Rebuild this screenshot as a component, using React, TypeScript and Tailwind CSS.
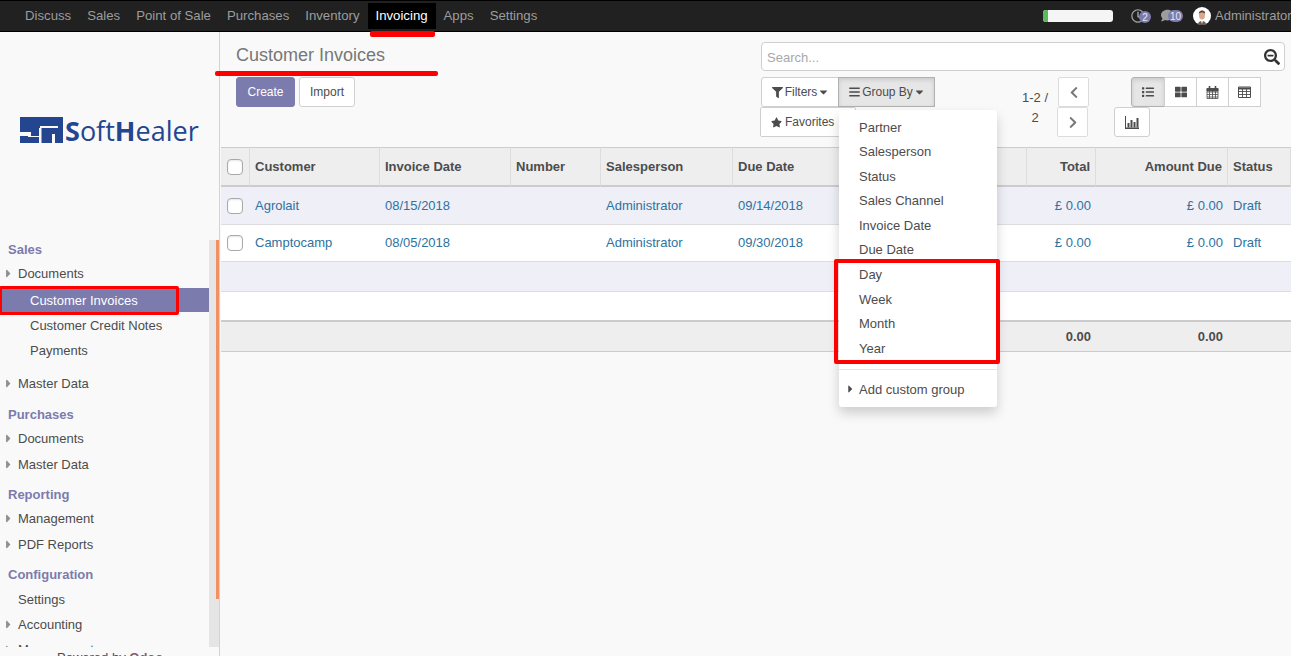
import {
  FaBars,
  FaCaretDown,
  FaCaretRight,
  FaChevronLeft,
  FaChevronRight,
  FaComment,
  FaFilter,
  FaList,
  FaRegClock,
  FaSearchMinus,
  FaStar,
  FaThLarge,
} from "react-icons/fa";

const navItems = ["Discuss", "Sales", "Point of Sale", "Purchases", "Inventory", "Invoicing", "Apps", "Settings"];

const groupItems = ["Partner", "Salesperson", "Status", "Sales Channel", "Invoice Date", "Due Date", "Day", "Week", "Month", "Year"];

const rows = [
  { customer: "Agrolait", date: "08/15/2018", due: "09/14/2018", rowClass: "bg-[#eeeff7]", cellClass: "h-[38px]" },
  { customer: "Camptocamp", date: "08/05/2018", due: "09/30/2018", rowClass: "bg-white", cellClass: "h-[37px]" },
];

function Logo() {
  return (
    <div className="flex h-[26px] items-center pl-5">
      <svg width="43" height="26" viewBox="0 0 43 26" className="shrink-0">
        <rect width="43" height="26" fill="#24458f" />
        <path d="M20 9H38V11H20z M0 15H11V19H0z M19 11H21.500V26H19z M32 17H35V26H32z M8 19H19V20H8z" fill="#f9f9f9" />
      </svg>
      <div className="ml-[2px] font-['Open_Sans',sans-serif] text-[27px] leading-none text-[#24458f]">
        <span className="font-bold">S</span>
        of
        <span>t</span>
        <span className="font-bold">H</span>
        ealer
      </div>
    </div>
  );
}

function MenuHeader({ label, className }: { label: string; className: string }) {
  return <div className={`flex h-[18px] items-center pl-2 pt-[2px] font-bold text-[#7c7bad] ${className}`}>{label}</div>;
}

function MenuItem({ label, className }: { label: string; className: string }) {
  return (
    <div className={`relative flex h-6 items-center pl-[18px] pt-[2px] text-[#4c4c4c] ${className}`}>
      <FaCaretRight className="absolute left-[6px] top-[6px] h-[13px] w-[5px] text-[#8f8f8f]" />
      {label}
    </div>
  );
}

function Sidebar() {
  return (
    <aside className="flex w-[220px] shrink-0 flex-col border-r border-[#d3d3d3] bg-[#f9f9f9]">
      <div className="h-[208px] pt-[85px]">
        <Logo />
      </div>
      <div className="flex h-[407px] overflow-hidden">
        <nav className="flex-1">
          <MenuHeader label="Sales" className="" />
          <MenuItem label="Documents" className="mt-[3px]" />
          <div className="mt-[3px] flex h-6 items-center bg-[#7c7bad] pl-[30px] pt-[2px] text-white">Customer Invoices</div>
          <div className="mt-px flex h-6 items-center pl-[30px] pt-[2px] text-[#4c4c4c]">Customer Credit Notes</div>
          <div className="mt-px flex h-6 items-center pl-[30px] pt-[2px] text-[#4c4c4c]">Payments</div>
          <MenuItem label="Master Data" className="mt-[9px]" />
          <MenuHeader label="Purchases" className="mt-[10px]" />
          <MenuItem label="Documents" className="mt-[3px]" />
          <MenuItem label="Master Data" className="mt-[2px]" />
          <MenuHeader label="Reporting" className="mt-[9px]" />
          <MenuItem label="Management" className="mt-[3px]" />
          <MenuItem label="PDF Reports" className="mt-[2px]" />
          <MenuHeader label="Configuration" className="mt-[9px]" />
          <div className="mt-[4px] flex h-6 items-center pl-[18px] pt-[2px] text-[#4c4c4c]">Settings</div>
          <MenuItem label="Accounting" className="mt-px" />
          <MenuItem label="Management" className="mt-px" />
        </nav>
        <div className="flex w-[10px] shrink-0 justify-end bg-[#e5e5e5]">
          <div className="h-[359px] w-[3px] bg-[#f28f63]" />
        </div>
      </div>
      <div className="pl-[57px] pt-px text-[#4c4c4c]">
        Powered by <span className="font-bold text-[#875a7b]">Odoo</span>
      </div>
    </aside>
  );
}

function TopBar() {
  return (
    <header className="flex h-8 shrink-0 items-start justify-between overflow-hidden border-y border-black bg-[#212121] pl-[17px]">
      <div className="flex">
        {navItems.map((item) => (
          <a
            key={item}
            className={
              item === "Invoicing"
                ? "mt-[2px] flex h-[26px] items-center bg-black px-2 text-[13.2px] text-white"
                : "mt-[2px] flex h-[26px] items-center px-2 text-[13.2px] text-[#9d9d9d]"
            }
          >
            {item}
          </a>
        ))}
      </div>
      <div className="flex h-[30px] w-[248px] shrink-0 items-center">
        <div className="h-[12px] w-[70px] shrink-0 overflow-hidden rounded-[3px] bg-[#f5f5f5]">
          <div className="h-full w-[5px] bg-[#5cb85c]" />
        </div>
        <div className="relative ml-[18px] h-[14px] w-[14px]">
          <FaRegClock className="h-[14px] w-[14px] text-[#9d9d9d]" />
          <span className="absolute left-[8px] top-[2px] flex h-[12px] w-[12px] items-center justify-center rounded-full bg-[#7c7bad] text-[10px] text-[#e8e8f2]">2</span>
        </div>
        <div className="relative ml-[16px] h-[14px] w-[14px]">
          <FaComment className="h-[13px] w-[13px] text-[#9d9d9d]" />
          <span className="absolute left-[7px] top-[1px] flex h-[12px] w-[15px] items-center justify-center rounded-full bg-[#7c7bad] text-[10px] text-[#e8e8f2]">10</span>
        </div>
        <svg width="18" height="18" viewBox="0 0 18 18" className="ml-[19px] shrink-0">
          <circle cx="9" cy="9" r="9" fill="#fff" />
          <path d="M5 18c0-3 1.500-4 4-4s4 1 4 4z" fill="#6b5a50" />
          <path d="M8 13.500h2l-1 3.500z" fill="#fff" />
          <ellipse cx="9" cy="8" rx="3" ry="4.600" fill="#d9a98c" />
          <path d="M5.800 7c-.4-4.500 6.800-5 6.400 0-1-2-5.400-2-6.400 0z" fill="#5b4636" />
        </svg>
        <span className="ml-1 whitespace-nowrap text-[#9d9d9d]">Administrator</span>
      </div>
    </header>
  );
}

function CalendarIcon() {
  return (
    <svg width="13" height="14" viewBox="0 0 13 14" fill="none" stroke="#4c4c4c">
      <path d="M1 3.500h11v10H1z M1 7h11 M1 9.500h11 M1 12h11 M3.500 3.500v10 M6.500 3.500v10 M9.500 3.500v10" strokeWidth="0.8" />
      <path d="M1 3.500h11V6H1z" fill="#4c4c4c" strokeWidth="0.8" />
      <path d="M3.500 1v3 M9.500 1v3" strokeWidth="1.600" />
    </svg>
  );
}

function TableIcon() {
  return (
    <svg width="13" height="12" viewBox="0 0 13 12" fill="none" stroke="#4c4c4c">
      <path d="M.5 1h12v10.500H.5z" />
      <path d="M.5 2.500h12" strokeWidth="2" />
      <path d="M.5 5.500h12 M.5 8.500h12 M4.500 2v9 M8.500 2v9" strokeWidth="0.9" />
    </svg>
  );
}

function BarsIcon() {
  return (
    <svg width="14" height="13" viewBox="0 0 14 13" fill="#4c4c4c">
      <path d="M0 0h1v11.500h14V13H0z" />
      <path d="M2.500 7h2v4.500h-2z M5.500 4h2v7.500h-2z M8.500 6h2v5.500h-2z M11.500 2h2v9.500h-2z" />
    </svg>
  );
}

function ControlPanel() {
  const button = "flex h-[30px] items-center justify-center border";
  const normal = "border-[#cfcfcf] bg-white text-[#4c4c4c]";
  const active = "border-[#b0b0b0] bg-[#e6e6e6] text-[#4c4c4c] shadow-[inset_0_2px_4px_rgba(0,0,0,0.12)]";
  const pagerButton = "border-[#dcdcdc] bg-white text-[#777777]";
  return (
    <div className="flex h-[115px] shrink-0 bg-[#f9f9f9]">
      <div className="w-[541px] shrink-0 pl-4">
        <div className="flex h-[45px] items-center pt-[2px] text-[18px] text-[#777777]">Customer Invoices</div>
        <div className="flex gap-1">
          <button className="h-[30px] w-[59px] rounded-[3px] border border-[#7c7bad] bg-[#7c7bad] text-[12px] text-white">Create</button>
          <button className="h-[30px] w-[56px] rounded-[3px] border border-[#d0d0d0] bg-white text-[12px] text-[#4c4c4c]">Import</button>
        </div>
      </div>
      <div className="w-[524px] shrink-0 pt-[10px]">
        <div className="flex h-[29px] items-center justify-between rounded-[4px] border border-[#cfcfcf] bg-white pl-[5px] pr-[4px]">
          <span className="pt-[2px] text-[#a8a8a8]">Search...</span>
          <FaSearchMinus className="h-4 w-4 text-[#333333]" />
        </div>
        <div className="mt-[6px] flex">
          <div className="w-[250px]">
            <div className="flex">
              <button className={`${button} ${normal} w-[78px] gap-[2px] rounded-l-[3px] text-[12px]`}>
                <FaFilter className="h-[11px] w-[11px]" />
                Filters
                <FaCaretDown className="h-[12px] w-[9px]" />
              </button>
              <button className={`${button} ${active} -ml-px w-[97px] gap-[2px] text-[12px]`}>
                <FaBars className="h-[12px] w-[11px]" />
                Group By
                <FaCaretDown className="h-[12px] w-[9px]" />
              </button>
            </div>
            <button className={`${button} ${normal} -ml-px w-[96px] justify-start gap-[3px] rounded-[2px] pl-[10px] text-[12px]`}>
              <FaStar className="h-[11px] w-[11px]" />
              Favorites
            </button>
          </div>
          <div className="w-[47px] pl-px pt-[11px] text-center leading-[20px] text-[#4c4c4c]">
            1-2 /<br />2
          </div>
          <div className="w-[30px]">
            <button className={`${button} ${pagerButton} w-[31px] rounded-[2px]`}>
              <FaChevronLeft className="h-[13px] w-[10px]" />
            </button>
            <button className={`${button} ${pagerButton} -ml-px w-[31px] rounded-[2px]`}>
              <FaChevronRight className="h-[13px] w-[10px]" />
            </button>
          </div>
          <div className="ml-[26px] w-[147px]">
            <div className="flex justify-end">
              <button className={`${button} ${active} w-[34px] rounded-l-[3px]`}>
                <FaList className="h-[12px] w-[12px]" />
              </button>
              <button className={`${button} ${normal} -ml-px w-[33px]`}>
                <FaThLarge className="h-[12px] w-[12px]" />
              </button>
              <button className={`${button} ${normal} -ml-px w-[33px]`}>
                <CalendarIcon />
              </button>
              <button className={`${button} ${normal} -ml-px w-[33px]`}>
                <TableIcon />
              </button>
            </div>
            <button className={`${button} ${normal} w-[36px] rounded-[3px]`}>
              <BarsIcon />
            </button>
          </div>
        </div>
      </div>
    </div>
  );
}

function Checkbox() {
  return <div className="ml-[6px] h-4 w-4 rounded-[4px] border border-[#a9a9a9] bg-white shadow-[inset_0_1px_2px_rgba(0,0,0,0.1)]" />;
}

function InvoiceTable() {
  const head = "border-y-[#cccccc] border-t border-b-2 border-r border-r-[#dddddd] bg-[#eeeeee] px-[5px] text-left font-bold text-[#4c4c4c]";
  const headRight = "border-y-[#cccccc] border-t border-b-2 border-r border-r-[#dddddd] bg-[#eeeeee] px-[5px] text-right font-bold text-[#4c4c4c]";
  const link = "border-b border-[#dddddd] px-[5px] text-[#2d72a0]";
  const linkRight = "border-b border-[#dddddd] px-[5px] text-right text-[#2d72a0]";
  const foot = "border-t-2 border-b border-t-[#cccccc] border-b-[#cccccc] bg-[#eeeeee] px-[5px] text-right font-bold text-[#4c4c4c]";
  return (
    <div className="pl-px">
      <table className="w-[1070px] table-fixed border-separate border-spacing-0">
        <colgroup>
          <col className="w-[29px]" />
          <col className="w-[130px]" />
          <col className="w-[131px]" />
          <col className="w-[90px]" />
          <col className="w-[132px]" />
          <col className="w-[108px]" />
          <col className="w-[186px]" />
          <col className="w-[69px]" />
          <col className="w-[132px]" />
          <col className="w-[63px]" />
        </colgroup>
        <thead>
          <tr>
            <th className="h-10 border-y-[#cccccc] border-t border-b-2 border-r border-r-[#dddddd] bg-[#eeeeee]">
              <Checkbox />
            </th>
            <th className={head}>Customer</th>
            <th className={head}>Invoice Date</th>
            <th className={head}>Number</th>
            <th className={head}>Salesperson</th>
            <th className={head}>Due Date</th>
            <th className={head} />
            <th className={headRight}>Total</th>
            <th className={headRight}>Amount Due</th>
            <th className={head}>Status</th>
          </tr>
        </thead>
        <tbody>
          {rows.map((row) => (
            <tr key={row.customer} className={row.rowClass}>
              <td className={`${row.cellClass} border-b border-[#dddddd]`}>
                <Checkbox />
              </td>
              <td className={link}>{row.customer}</td>
              <td className={link}>{row.date}</td>
              <td className={link} />
              <td className={link}>Administrator</td>
              <td className={link}>{row.due}</td>
              <td className={link} />
              <td className={linkRight}>£ 0.00</td>
              <td className={linkRight}>£ 0.00</td>
              <td className={link}>Draft</td>
            </tr>
          ))}
          <tr className="bg-[#eeeff7]">
            <td colSpan={10} className="h-[30px] border-b border-[#dddddd]" />
          </tr>
          <tr className="bg-white">
            <td colSpan={10} className="h-[28px]" />
          </tr>
        </tbody>
        <tfoot>
          <tr>
            <td colSpan={7} className={`${foot} h-8`} />
            <td className={foot}>0.00</td>
            <td className={foot}>0.00</td>
            <td className={foot} />
          </tr>
        </tfoot>
      </table>
    </div>
  );
}

function GroupByMenu() {
  return (
    <div className="absolute left-[839px] top-[110px] w-[158px] rounded-[3px] bg-white pb-[5px] pt-[5.15px] text-[#4c4c4c] shadow-[0_6px_12px_rgba(0,0,0,0.175)]">
      {groupItems.map((item) => (
        <div key={item} className="flex h-[24.57px] items-center pl-5">
          {item}
        </div>
      ))}
      <div className="mb-[7px] mt-[8.35px] h-px bg-[#e5e5e5]" />
      <div className="relative flex h-[24.57px] items-center pl-5">
        <FaCaretRight className="absolute left-[9px] top-[6px] h-[12px] w-[5px] text-[#4c4c4c]" />
        Add custom group
      </div>
    </div>
  );
}

// hand drawn red marks sitting over the screenshot
function Annotations() {
  return (
    <>
      <div className="absolute left-[370px] top-[31px] h-[6px] w-[65px] rounded-[2px] bg-[#ff0000]" />
      <div className="absolute left-[215px] top-[71px] h-[5px] w-[223px] rounded-[2px] bg-[#ff0000]" />
      <div className="absolute left-[-1px] top-[286px] h-[29px] w-[180px] rounded-[2px] border-[3px] border-[#ff0000]" />
      <div className="absolute left-[834px] top-[259px] h-[105px] w-[166px] rounded-[2px] border-4 border-[#ff0000]" />
    </>
  );
}

export default function App() {
  return (
    <div className="relative flex h-[656px] w-[1291px] flex-col overflow-hidden bg-[#f9f9f9] font-['Liberation_Sans',Arial,sans-serif] text-[13px]">
      <TopBar />
      <div className="flex flex-1">
        <Sidebar />
        <main className="flex-1">
          <ControlPanel />
          <InvoiceTable />
        </main>
      </div>
      <GroupByMenu />
      <Annotations />
    </div>
  );
}
